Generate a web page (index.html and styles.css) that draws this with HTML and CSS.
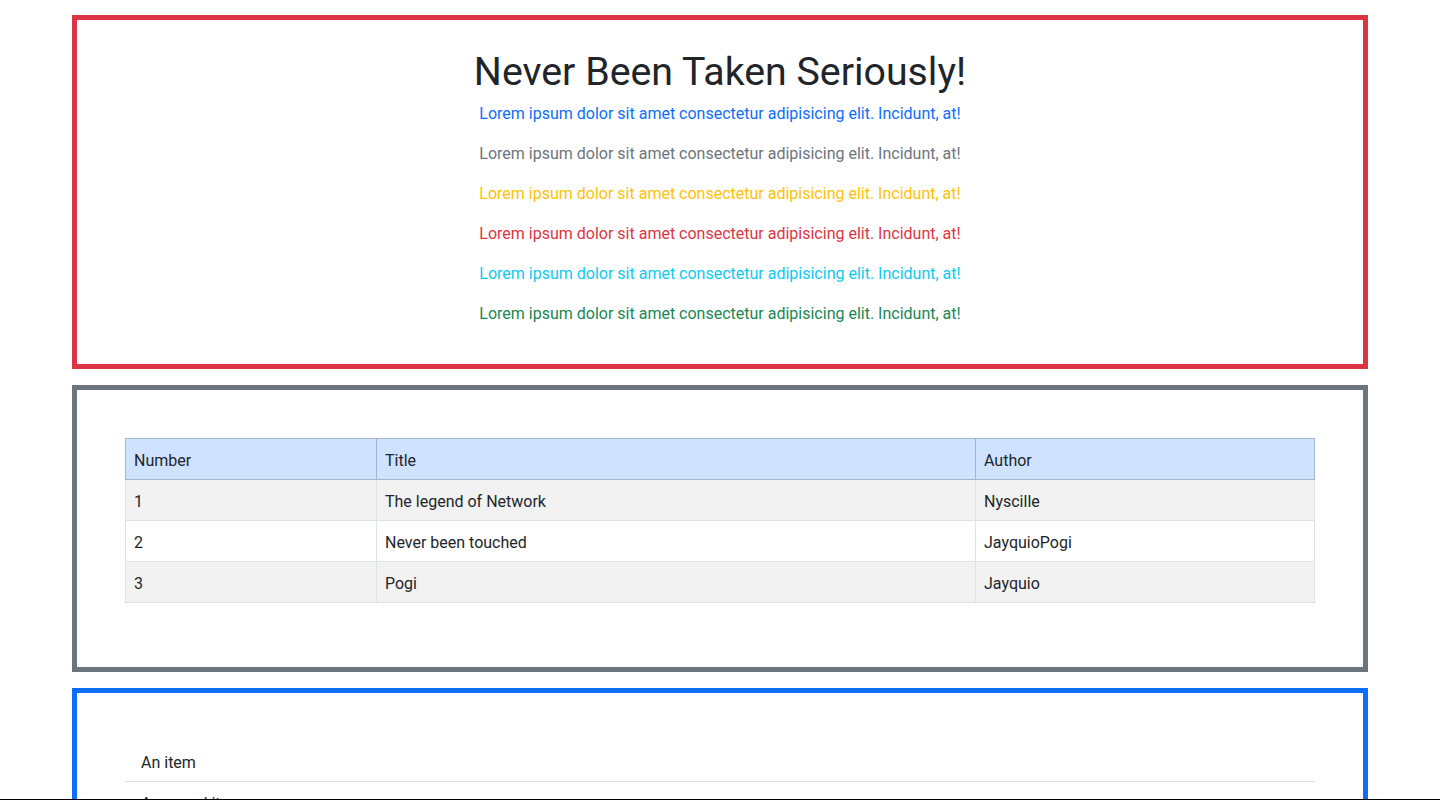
FILE: index.html
```html
<!DOCTYPE html>
<html lang="en">
<head>
<meta charset="utf-8">
<title>Never Been Taken Seriously!</title>
<link rel="stylesheet" href="styles.css">
</head>
<body>
<div class="page">
  <div class="container">
    <section class="box box-danger intro">
      <h1 class="title">Never Been Taken Seriously!</h1>
      <p class="text-primary">Lorem ipsum dolor sit amet consectetur adipisicing elit. Incidunt, at!</p>
      <p class="text-secondary">Lorem ipsum dolor sit amet consectetur adipisicing elit. Incidunt, at!</p>
      <p class="text-warning">Lorem ipsum dolor sit amet consectetur adipisicing elit. Incidunt, at!</p>
      <p class="text-danger">Lorem ipsum dolor sit amet consectetur adipisicing elit. Incidunt, at!</p>
      <p class="text-info">Lorem ipsum dolor sit amet consectetur adipisicing elit. Incidunt, at!</p>
      <p class="text-success">Lorem ipsum dolor sit amet consectetur adipisicing elit. Incidunt, at!</p>
    </section>

    <section class="box box-secondary padded">
      <table class="table">
        <colgroup>
          <col class="col-num">
          <col class="col-title">
          <col class="col-author">
        </colgroup>
        <thead>
          <tr>
            <th>Number</th>
            <th>Title</th>
            <th>Author</th>
          </tr>
        </thead>
        <tbody>
          <tr class="striped">
            <td>1</td>
            <td>The legend of Network</td>
            <td>Nyscille</td>
          </tr>
          <tr>
            <td>2</td>
            <td>Never been touched</td>
            <td>JayquioPogi</td>
          </tr>
          <tr class="striped">
            <td>3</td>
            <td>Pogi</td>
            <td>Jayquio</td>
          </tr>
        </tbody>
      </table>
    </section>

    <section class="box box-primary padded">
      <ul class="list-group">
        <li class="list-item">An item</li>
        <li class="list-item">A second item</li>
        <li class="list-item">A third item</li>
        <li class="list-item">A fourth item</li>
        <li class="list-item">And a fifth one</li>
      </ul>
    </section>
  </div>
</div>
<div class="window-edge"></div>
</body>
</html>
```
FILE: styles.css
```css
* { box-sizing: border-box; }

html, body {
  margin: 0;
  padding: 0;
  background: #fff;
}

body {
  font-family: Roboto, "Liberation Sans", sans-serif;
  font-size: 16px;
  line-height: 1.5;
  color: #212529;
}

.page {
  width: 1440px;
}

.container {
  width: 1296px;
  margin: 0 auto;
  padding: 15px 0 40px;
  display: flex;
  flex-direction: column;
  gap: 16px;
}

.box {
  border: 5px solid;
  background: #fff;
}

.box-danger { border-color: #dc3545; }
.box-secondary { border-color: #6c757d; }
.box-primary { border-color: #0d6efd; }

.intro {
  padding: 25px 24px 23px;
  text-align: center;
}

.title {
  margin: 0 0 2px;
  font-size: 39.3px;
  font-weight: 400;
  line-height: 54px;
  color: #212529;
}

.intro p {
  margin: 0 0 16px;
  line-height: 24px;
  position: relative;
  top: 1px;
}

.text-primary { color: #0d6efd; }
.text-secondary { color: #6c757d; }
.text-warning { color: #ffc107; }
.text-danger { color: #dc3545; }
.text-info { color: #0dcaf0; }
.text-success { color: #198754; }

.padded {
  padding: 48px;
}

.table {
  width: 100%;
  border-collapse: collapse;
  table-layout: fixed;
  margin-bottom: 16px;
  color: #212529;
}

.col-num { width: 251px; }
.col-title { width: 599px; }

.table th,
.table td {
  padding: 10px 8px 6px;
  text-align: left;
  font-weight: 400;
  line-height: 24px;
  border: 1px solid #dee2e6;
}

.table thead th {
  background: #cfe2ff;
  border-color: #a6b5cc;
}

.table tbody tr.striped td {
  background: #f2f2f2;
}

.list-group {
  list-style: none;
  margin: 0;
  padding: 0;
}

.list-item {
  padding: 10px 16px 6px;
  line-height: 24px;
  border-bottom: 1px solid #dfdfdf;
  color: #212529;
}

.list-item:last-child {
  border-bottom: 0;
}

.window-edge {
  position: fixed;
  left: 0;
  bottom: 0;
  width: 1440px;
  height: 1px;
  background: #000;
}
```
